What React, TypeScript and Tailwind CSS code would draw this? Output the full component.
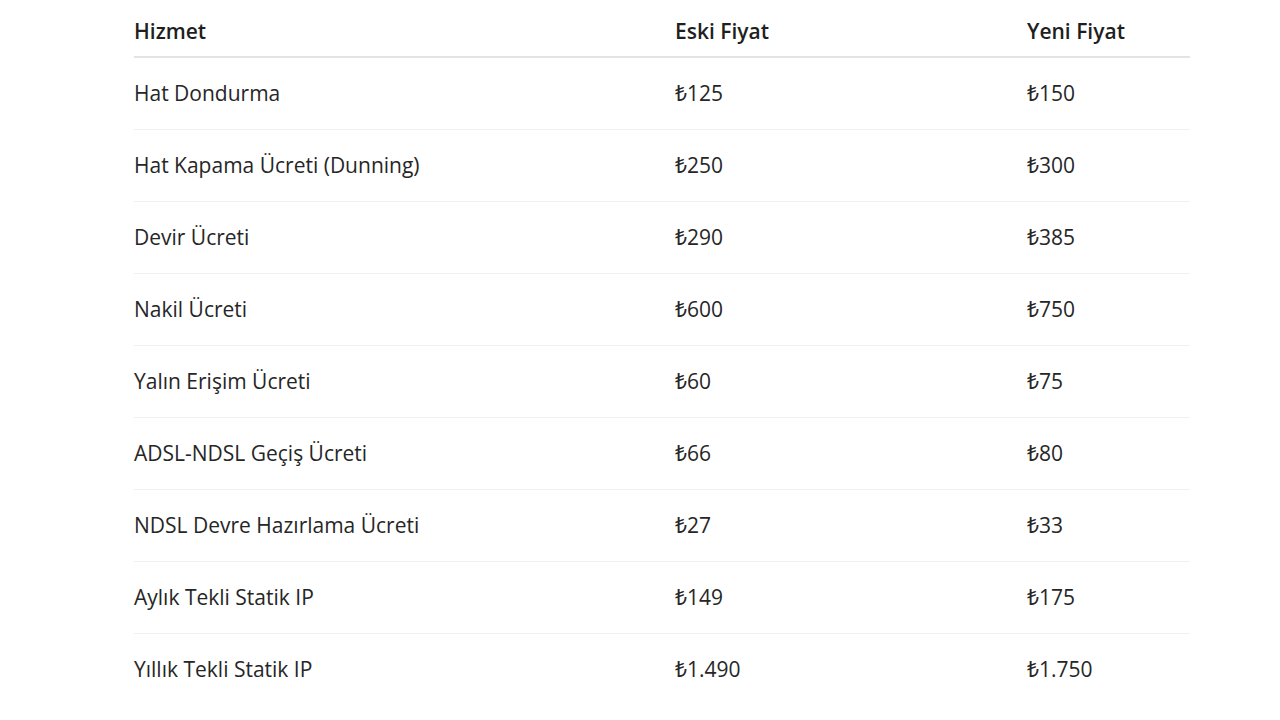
import React from "react";

const rows: [string, string, string][] = [
  ["Hat Dondurma", "₺125", "₺150"],
  ["Hat Kapama Ücreti (Dunning)", "₺250", "₺300"],
  ["Devir Ücreti", "₺290", "₺385"],
  ["Nakil Ücreti", "₺600", "₺750"],
  ["Yalın Erişim Ücreti", "₺60", "₺75"],
  ["ADSL-NDSL Geçiş Ücreti", "₺66", "₺80"],
  ["NDSL Devre Hazırlama Ücreti", "₺27", "₺33"],
  ["Aylık Tekli Statik IP", "₺149", "₺175"],
  ["Yıllık Tekli Statik IP", "₺1.490", "₺1.750"],
];

export default function App() {
  return (
    <div
      className="w-[1280px] h-[720px] bg-white overflow-hidden text-[#262626]"
      style={{ fontFamily: '"Open Sans", "Noto Sans", sans-serif' }}
    >
      <div className="ml-[134px] w-[1056px]">
        <div className="grid grid-cols-[541px_352px_163px] h-[58px] items-center pt-[7px] border-b-2 border-[#e3e3e3] text-[21px] font-semibold text-[#1f1f1f]">
          <div>Hizmet</div>
          <div>Eski Fiyat</div>
          <div>Yeni Fiyat</div>
        </div>
        {rows.map((r, i) => (
          <div
            key={i}
            className={`grid grid-cols-[541px_352px_163px] h-[72px] items-center text-[21px] ${
              i < rows.length - 1 ? "border-b border-[#f0f0f0]" : ""
            }`}
          >
            <div>{r[0]}</div>
            <div>{r[1]}</div>
            <div>{r[2]}</div>
          </div>
        ))}
      </div>
    </div>
  );
}
